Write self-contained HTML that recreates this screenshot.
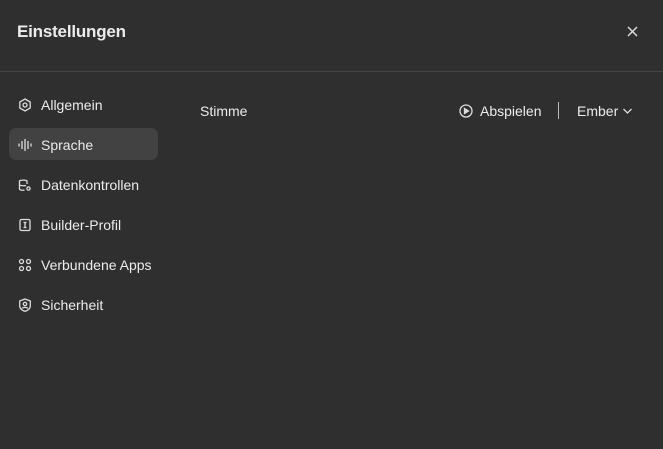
<!DOCTYPE html>
<html><head><meta charset="utf-8"><style>
*{margin:0;padding:0;box-sizing:border-box}
body{width:663px;height:449px;background:#2f2f2f;font-family:"Liberation Sans",sans-serif;color:#ececec;position:relative;overflow:hidden}
.t{position:absolute;left:17px;top:22px;font-size:17px;font-weight:bold;letter-spacing:-0.2px}
.x{position:absolute;left:626px;top:25px}
.hr{position:absolute;left:0;right:0;top:71px;height:1px;background:#454545}
.it{position:absolute;left:9px;width:149px;height:32px;border-radius:7px;font-size:14px;display:flex;align-items:center;padding-left:9px;padding-top:1px}
.it svg{margin-right:9px}
.sel{background:#424242}
.r{position:absolute;top:103px;font-size:14px}
.sep{position:absolute;left:558px;top:102px;width:1px;height:17px;background:#bbb}
</style></head><body>
<div class="t">Einstellungen</div>
<svg class="x" width="13" height="13" viewBox="0 0 13 13" stroke="#ddd" stroke-width="1.5"><path d="M2 2L11 11M11 2L2 11"/></svg>
<div class="hr"></div>
<div class="it" style="top:88px"><svg width="14" height="14" viewBox="0 0 14 14" fill="none" stroke="#ddd" stroke-width="1.3"><path d="M7 1L12.2 4V10L7 13L1.8 10V4Z"/><circle cx="7" cy="7" r="2"/></svg>Allgemein</div>
<div class="it sel" style="top:128px"><svg width="14" height="14" viewBox="0 0 14 14" stroke="#ddd" stroke-width="1.3"><path d="M1 5.5V8.5M4 3V11M7 1V13M10 3V11M13 5.5V8.5"/></svg>Sprache</div>
<div class="it" style="top:168px"><svg width="14" height="14" viewBox="0 0 14 14" fill="none" stroke="#ddd" stroke-width="1.3"><path d="M9 6V3C9 1.8 1.5 1.8 1.5 3V11C1.5 12.2 5 12.5 6.5 12M1.5 6.5C1.5 7.7 6 8 8 7.5"/><circle cx="10.5" cy="10.5" r="1.6"/></svg>Datenkontrollen</div>
<div class="it" style="top:208px"><svg width="14" height="14" viewBox="0 0 14 14" fill="none" stroke="#ddd" stroke-width="1.3"><rect x="2" y="1.5" width="10" height="11" rx="1.5"/><path d="M5.5 4.5H8.5M7 4.5V9.5M5.5 9.5H8.5"/></svg>Builder-Profil</div>
<div class="it" style="top:248px"><svg width="14" height="14" viewBox="0 0 14 14" fill="none" stroke="#ddd" stroke-width="1.3"><circle cx="3.5" cy="3.5" r="2"/><circle cx="10.5" cy="3.5" r="2"/><circle cx="3.5" cy="10.5" r="2"/><circle cx="10.5" cy="10.5" r="2"/></svg>Verbundene Apps</div>
<div class="it" style="top:288px"><svg width="14" height="14" viewBox="0 0 14 14" fill="none" stroke="#ddd" stroke-width="1.3"><path d="M7 1L12.3 3V8C12.3 11 9 12.8 7 13.3C5 12.8 1.7 11 1.7 8V3Z"/><circle cx="7" cy="6" r="1.7"/><path d="M4.2 10.5C5 9 9 9 9.8 10.5"/></svg>Sicherheit</div>
<div class="r" style="left:200px">Stimme</div>
<svg style="position:absolute;left:459px;top:104px" width="14" height="14" viewBox="0 0 14 14" fill="none" stroke="#ddd" stroke-width="1.3"><circle cx="7" cy="7" r="6"/><path d="M5.5 4.5L9.5 7L5.5 9.5Z" fill="#ddd"/></svg>
<div class="r" style="left:480px">Abspielen</div>
<div class="sep"></div>
<div class="r" style="left:577px">Ember</div>
<svg style="position:absolute;left:622px;top:107px" width="11" height="8" viewBox="0 0 11 8" fill="none" stroke="#ddd" stroke-width="1.3"><path d="M1.5 2L5.5 6L9.5 2"/></svg>
</body></html>
